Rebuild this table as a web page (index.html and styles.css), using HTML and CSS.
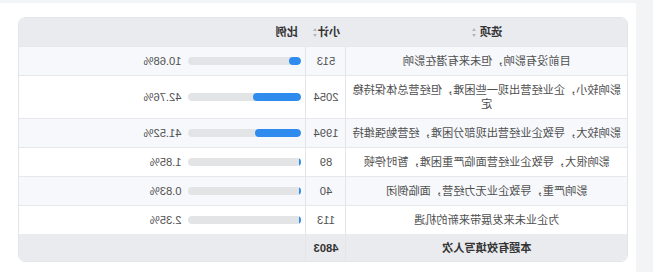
FILE: index.html
```html
<!DOCTYPE html>
<html lang="zh">
<head>
<meta charset="utf-8">
<link rel="stylesheet" href="styles.css">
</head>
<body>
<div class="panel">
  <div class="card">
    <table class="stats">
      <colgroup><col class="c-opt"><col class="c-sum"><col class="c-pct"></colgroup>
      <thead>
        <tr>
          <th class="opt">选项 <span class="sort"></span></th>
          <th class="sum">小计<span class="sort"></span></th>
          <th class="pct">比例</th>
        </tr>
      </thead>
      <tbody>
        <tr>
          <td class="opt">目前没有影响，但未来有潜在影响</td>
          <td class="sum">513</td>
          <td class="pct"><div class="pw"><div class="bar"><div class="fill" style="width:10.68%"></div></div><span>10.68%</span></div></td>
        </tr>
        <tr>
          <td class="opt">影响较小，企业经营出现一些困难，但经营总体保持稳定</td>
          <td class="sum">2054</td>
          <td class="pct"><div class="pw"><div class="bar"><div class="fill" style="width:42.76%"></div></div><span>42.76%</span></div></td>
        </tr>
        <tr>
          <td class="opt">影响较大，导致企业经营出现部分困难，经营勉强维持</td>
          <td class="sum">1994</td>
          <td class="pct"><div class="pw"><div class="bar"><div class="fill" style="width:41.52%"></div></div><span>41.52%</span></div></td>
        </tr>
        <tr>
          <td class="opt">影响很大，导致企业经营面临严重困难，暂时停顿</td>
          <td class="sum">89</td>
          <td class="pct"><div class="pw"><div class="bar"><div class="fill thin" style="width:1.85%"></div></div><span>1.85%</span></div></td>
        </tr>
        <tr>
          <td class="opt">影响严重，导致企业无力经营，面临倒闭</td>
          <td class="sum">40</td>
          <td class="pct"><div class="pw"><div class="bar"><div class="fill thin" style="width:0.83%"></div></div><span>0.83%</span></div></td>
        </tr>
        <tr>
          <td class="opt">为企业未来发展带来新的机遇</td>
          <td class="sum">113</td>
          <td class="pct"><div class="pw"><div class="bar"><div class="fill thin" style="width:2.35%"></div></div><span>2.35%</span></div></td>
        </tr>
      </tbody>
      <tfoot>
        <tr>
          <td class="opt">本题有效填写人次</td>
          <td class="sum">4803</td>
          <td class="pct"></td>
        </tr>
      </tfoot>
    </table>
  </div>
</div>
</body>
</html>
```
FILE: styles.css
```css
html {
  transform: scaleX(-1);
}
body {
  margin: 0;
  background: #f3f4f6;
  font-family: "Liberation Sans", "Noto Sans CJK SC", sans-serif;
  font-size: 11.2px;
  color: #505050;
  width: 653px;
  height: 272px;
  overflow: hidden;
}
.panel {
  margin: 3px 0 0 17px;
  background: #fff;
  height: 269px;
  padding: 14px 18px 0 8px;
  box-sizing: border-box;
}
.card {
  border: 1px solid #e3e5e9;
  border-radius: 7px;
  overflow: hidden;
  width: 610px;
  box-sizing: border-box;
}
.stats {
  width: 100%;
  border-collapse: collapse;
  table-layout: fixed;
}
.c-opt { width: 281px; }
.c-sum { width: 40px; }
.c-pct { width: 287px; }
th, td {
  padding: 0 6px;
  line-height: 14px;
}
thead th {
  background: #e9ebef;
  height: 28px;
  font-weight: bold;
  color: #333;
}
th.opt, th.sum { text-align: center; }
th.pct { text-align: left; padding-left: 8px; }
th.sum { padding: 0; }
tbody td {
  padding-top: 7px;
  padding-bottom: 7px;
  border-top: 1px solid #e6e8eb;
}
tbody tr:nth-child(odd) td { background: #f6f8fb; }
tbody tr:nth-child(even) td { background: #fff; }
td.opt { text-align: center; border-right: 1px solid #e3e5e8; }
td.sum { text-align: center; padding-left: 0; padding-right: 0; border-right: 1px solid #e3e5e8; }
td.pct { padding-left: 4px; padding-right: 0; }
tfoot td {
  background: #e9ebef;
  height: 27px;
  font-weight: bold;
  color: #333;
}
.pw {
  display: flex;
  align-items: center;
  gap: 7px;
}
.bar {
  width: 113px;
  height: 8px;
  border-radius: 4px;
  background: #e3e4e6;
  overflow: hidden;
}
.fill {
  height: 100%;
  background: #2f8cee;
  border-radius: 4px;
  min-width: 2px;
}
.fill.thin { border-radius: 0; }
.sort {
  display: inline-block;
  position: relative;
  width: 5px;
  height: 9px;
  vertical-align: -1px;
  margin-left: 1px;
}
.sort::before, .sort::after {
  content: "";
  position: absolute;
  left: 0;
  border-left: 2.5px solid transparent;
  border-right: 2.5px solid transparent;
}
.sort::before { top: 0; border-bottom: 3.5px solid #b3b7bd; }
.sort::after { bottom: 0; border-top: 3.5px solid #b3b7bd; }
```
